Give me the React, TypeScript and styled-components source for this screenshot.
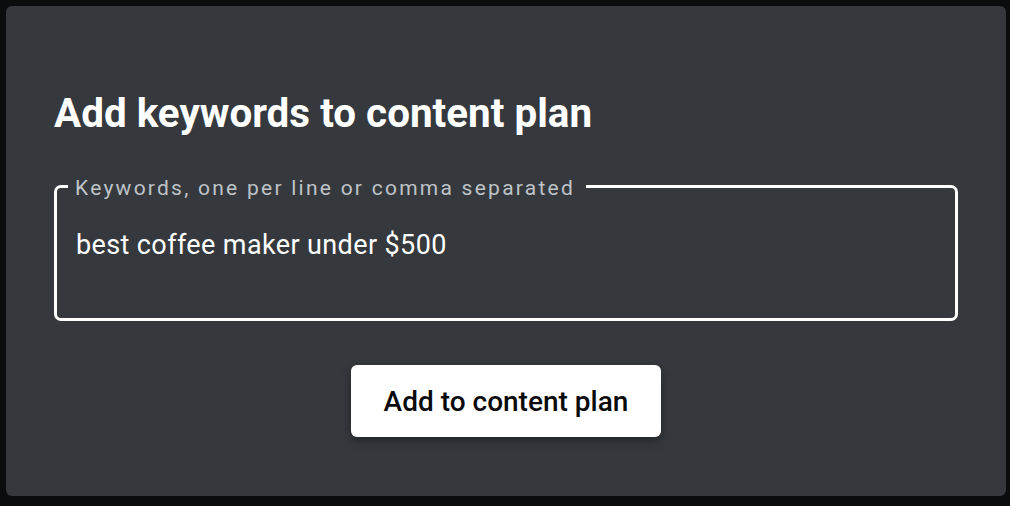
import React from "react";
import styled, { createGlobalStyle } from "styled-components";

const Global = createGlobalStyle`
  html, body { margin: 0; padding: 0; background: #0b0c0d; }
  body { font-family: Roboto, "Noto Sans", sans-serif; }
`;

const Page = styled.div`
  width: 1010px;
  height: 506px;
  box-sizing: border-box;
  padding: 6px 4px 10px 6px;
  background: #0b0c0d;
`;

const Card = styled.section`
  box-sizing: border-box;
  height: 100%;
  background: #35393d;
  border-radius: 6px;
  padding: 84px 48px 0 48px;
  display: flex;
  flex-direction: column;
`;

const Title = styled.h2`
  margin: 0;
  font-family: Roboto, sans-serif;
  font-weight: 700;
  font-size: 40.4px;
  line-height: 48px;
  color: #ffffff;
`;

const Field = styled.fieldset`
  margin: 35px 0 0 0;
  padding: 0 19px;
  height: 148px;
  box-sizing: border-box;
  border: 3px solid #ffffff;
  border-radius: 7px;
  display: flex;
  flex-direction: column;
`;

const Legend = styled.legend`
  padding: 4px 11px 0 7px;
  margin-left: -8px;
  font-family: Roboto, sans-serif;
  font-size: 21px;
  line-height: 22px;
  letter-spacing: 2.25px;
  color: #bfc3c7;
`;

const Value = styled.div`
  margin-top: 30px;
  font-family: Roboto, sans-serif;
  font-size: 27px;
  line-height: 32px;
  letter-spacing: 0.38px;
  color: #ffffff;
`;

const Actions = styled.div`
  display: flex;
  justify-content: center;
  margin-top: 44px;
`;

const Button = styled.button`
  width: 310px;
  height: 72px;
  border: none;
  border-radius: 6px;
  background: #ffffff;
  color: #0a0a0a;
  font-family: Roboto, sans-serif;
  font-weight: 500;
  font-size: 28px;
  box-shadow: 0 4px 10px rgba(0, 0, 0, 0.35);
  cursor: pointer;
`;

export default function App() {
  return (
    <>
      <Global />
      <Page>
        <Card>
          <Title>Add keywords to content plan</Title>
          <Field>
            <Legend>Keywords, one per line or comma separated</Legend>
            <Value>best coffee maker under $500</Value>
          </Field>
          <Actions>
            <Button>Add to content plan</Button>
          </Actions>
        </Card>
      </Page>
    </>
  );
}
